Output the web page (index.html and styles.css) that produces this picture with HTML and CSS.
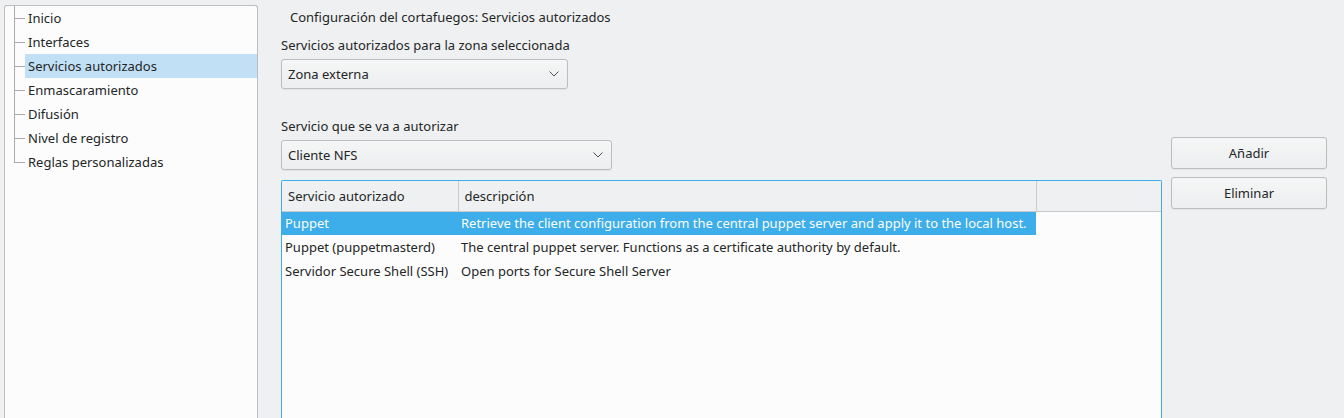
FILE: index.html
```html
<!DOCTYPE html>
<html lang="es">
<head>
<meta charset="utf-8">
<title>Cortafuegos</title>
<link rel="stylesheet" href="styles.css">
</head>
<body>
<div class="app">
  <aside class="sidebar">
    <ul class="tree">
      <li class="node"><span class="branch"></span><span class="label">Inicio</span></li>
      <li class="node"><span class="branch"></span><span class="label">Interfaces</span></li>
      <li class="node"><span class="branch"></span><span class="label selected">Servicios autorizados</span></li>
      <li class="node"><span class="branch"></span><span class="label">Enmascaramiento</span></li>
      <li class="node"><span class="branch"></span><span class="label">Difusión</span></li>
      <li class="node"><span class="branch"></span><span class="label">Nivel de registro</span></li>
      <li class="node last"><span class="branch"></span><span class="label">Reglas personalizadas</span></li>
    </ul>
  </aside>
  <main class="main">
    <div class="title">Configuración del cortafuegos: Servicios autorizados</div>
    <div class="field-label first">Servicios autorizados para la zona seleccionada</div>
    <div class="combo combo-zone">
      <span>Zona externa</span>
      <svg class="chev" width="10" height="6" viewBox="0 0 10 6"><path d="M0.5 0.5 L5 5 L9.5 0.5" fill="none" stroke="#4d4f50" stroke-width="1"/></svg>
    </div>
    <div class="field-label second">Servicio que se va a autorizar</div>
    <div class="lower">
      <div class="left-col">
        <div class="combo combo-service">
          <span>Cliente NFS</span>
          <svg class="chev" width="10" height="6" viewBox="0 0 10 6"><path d="M0.5 0.5 L5 5 L9.5 0.5" fill="none" stroke="#4d4f50" stroke-width="1"/></svg>
        </div>
        <div class="table-box">
          <table class="services">
            <colgroup><col class="c1"><col class="c2"><col></colgroup>
            <thead>
              <tr><th>Servicio autorizado</th><th>descripción</th><th class="filler"></th></tr>
            </thead>
            <tbody>
              <tr class="sel"><td>Puppet</td><td>Retrieve the client configuration from the central puppet server and apply it to the local host.</td><td class="filler"></td></tr>
              <tr><td>Puppet (puppetmasterd)</td><td>The central puppet server. Functions as a certificate authority by default.</td><td class="filler"></td></tr>
              <tr><td>Servidor Secure Shell (SSH)</td><td>Open ports for Secure Shell Server</td><td class="filler"></td></tr>
            </tbody>
          </table>
        </div>
      </div>
      <div class="buttons">
        <button class="btn">Añadir</button>
        <button class="btn">Eliminar</button>
      </div>
    </div>
  </main>
</div>
</body>
</html>
```

FILE: styles.css
```css
* { box-sizing: border-box; }
html, body {
  margin: 0;
  padding: 0;
  width: 1344px;
  height: 418px;
  overflow: hidden;
  background: #eff0f1;
  font-family: "Noto Sans", "DejaVu Sans", sans-serif;
  font-size: 13px;
  color: #232627;
}
.app {
  display: flex;
  height: 418px;
  padding-left: 4px;
}
.sidebar {
  width: 254px;
  height: 413px;
  margin-top: 5px;
  background: #fcfcfc;
  border: 1px solid #bcbebf;
  border-bottom: none;
  border-radius: 3px 3px 0 0;
}
.tree {
  list-style: none;
  margin: 0;
  padding: 0;
}
.node {
  display: flex;
  height: 24px;
}
.branch {
  width: 11px;
  margin-left: 9px;
  flex: none;
  background:
    linear-gradient(#a9abac, #a9abac) left top / 1px 100% no-repeat,
    linear-gradient(#a9abac, #a9abac) left 12px / 100% 1px no-repeat;
}
.node.last .branch {
  background:
    linear-gradient(#a9abac, #a9abac) left top / 1px 13px no-repeat,
    linear-gradient(#a9abac, #a9abac) left 12px / 100% 1px no-repeat;
}
.label {
  flex: 1;
  padding-left: 3px;
  line-height: 24px;
  white-space: nowrap;
}
.label.selected {
  background: #c2e0f5;
}
.main {
  flex: 1;
  display: flex;
  flex-direction: column;
  padding-left: 23px;
  min-height: 0;
}
.main > * { flex: none; }
.title {
  margin-top: 8px;
  margin-left: 9px;
  line-height: 18px;
}
.field-label {
  line-height: 18px;
}
.field-label.first { margin-top: 10px; }
.field-label.second { margin-top: 28px; }
.combo {
  flex: none;
  display: flex;
  align-items: center;
  justify-content: space-between;
  height: 30px;
  padding: 0 6px 0 6px;
  border: 1px solid #bbbdbe;
  border-radius: 3px;
  background: linear-gradient(#f5f6f6, #eceeef);
  box-shadow: 0 1px 1px rgba(0,0,0,0.06);
}
.combo-zone {
  width: 287px;
  margin-top: 5px;
}
.combo-service {
  width: 331px;
}
.chev { display: block; margin-right: 2px; }
.lower {
  display: flex;
  gap: 9px;
  margin-top: 2px;
}
.left-col {
  width: 881px;
  display: flex;
  flex-direction: column;
  padding-top: 3px;
}
.table-box {
  flex: none;
  margin-top: 10px;
  height: 238px;
  border: 1px solid #3daee9;
  border-bottom: none;
  border-radius: 2px 2px 0 0;
  background: #fcfcfc;
  overflow: hidden;
}
.services {
  width: 100%;
  border-collapse: collapse;
  table-layout: fixed;
}
.services col.c1 { width: 176px; }
.services col.c2 { width: 578px; }
.services th {
  height: 30px;
  padding: 0 0 0 6px;
  text-align: left;
  font-weight: normal;
  background: #eff0f1;
  border-bottom: 1px solid #c9cacb;
  border-right: 1px solid #c9cacb;
  white-space: nowrap;
}
.services th.filler { border-right: none; }
.services td {
  height: 24px;
  padding: 0 0 0 3px;
  white-space: nowrap;
  overflow: hidden;
}
.services tr.sel td {
  background: #3daee9;
  color: #fcfcfc;
}
.services tr.sel td.filler { background: #fcfcfc; }
.buttons {
  width: 156px;
  display: flex;
  flex-direction: column;
  gap: 8px;
}
.btn {
  height: 32px;
  font: inherit;
  color: #232627;
  border: 1px solid #bbbdbe;
  border-radius: 3px;
  background: linear-gradient(#f5f6f6, #eceeef);
  box-shadow: 0 1px 1px rgba(0,0,0,0.06);
  padding: 0;
}
```
